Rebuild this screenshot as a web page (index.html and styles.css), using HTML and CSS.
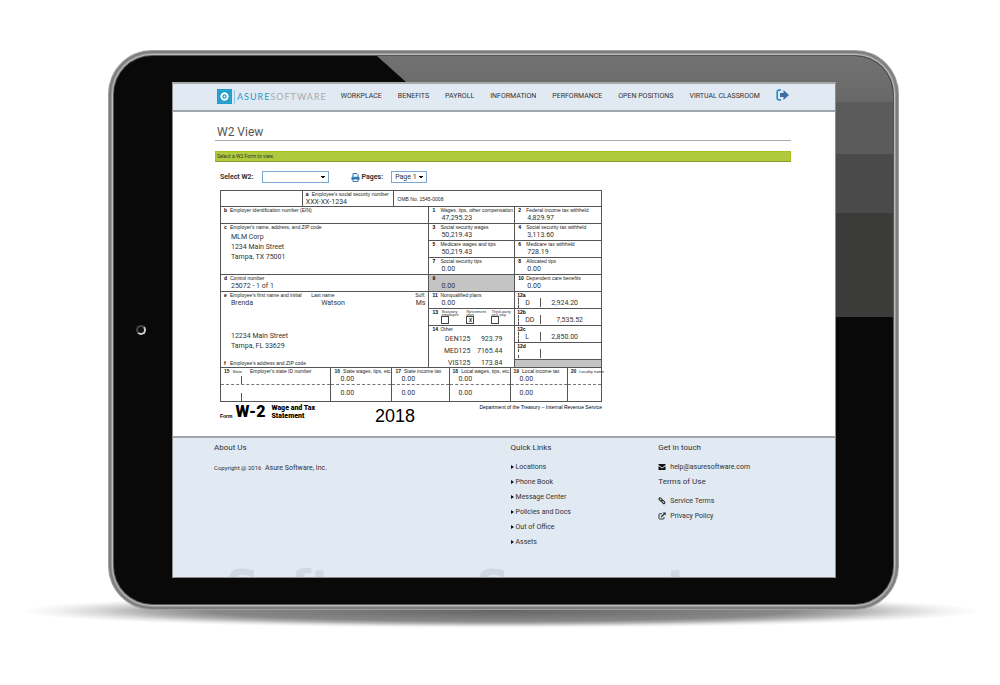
FILE: index.html
```html
<!DOCTYPE html>
<html lang="en">
<head>
<meta charset="utf-8">
<meta name="viewport" content="width=device-width, initial-scale=1">
<title>W2 View</title>
<link rel="stylesheet" href="styles.css">
</head>
<body>
<div class="stage">
<div class="tablet">
  <span class="home"></span>
  <div class="screen">
    <header class="top">
      <a class="logo" href="#">
        <svg class="logo-mark" viewBox="0 0 14 14" aria-hidden="true"><rect width="14" height="14" fill="#1f9ccb"/><rect x="1.5" y="1.5" width="11" height="11" fill="none" stroke="#5dbbe0" stroke-width=".6" stroke-dasharray="1 1"/><circle cx="7" cy="7" r="3" fill="none" stroke="#fff" stroke-width="1.8"/><circle cx="7" cy="7" r=".9" fill="#fff"/></svg>
        <span class="logo-text"><b>ASURE</b>SOFTWARE</span>
      </a>
      <nav class="menu">
        <a href="#">WORKPLACE</a><a href="#">BENEFITS</a><a href="#">PAYROLL</a><a href="#">INFORMATION</a><a href="#">PERFORMANCE</a><a href="#">OPEN POSITIONS</a><a href="#">VIRTUAL CLASSROOM</a>
        <a href="#" aria-label="Sign out"><svg class="exit" viewBox="0 0 13 12"><path d="M5 1.2H2.8Q1.2 1.2 1.2 2.8V9.2Q1.2 10.8 2.8 10.8H5" fill="none" stroke="#2f8fcb" stroke-width="1.7"/><path d="M4 4H7.500V1L13 6 7.500 11V8H4Z" fill="#3c6fa8"/></svg></a>
      </nav>
    </header>
    <main class="content">
      <h1>W2 View</h1>
      <p class="notice">Select a W2 Form to view.</p>
      <div class="controls">
        <label for="w2">Select W2:</label>
        <select id="w2" class="pick wide"><option></option></select>
        <svg class="printer" viewBox="0 0 9 9" aria-hidden="true"><path d="M2 4V.6H6L7 1.600V4" fill="#fff" stroke="#2a6ca8"/><path d="M.5 7V4.500Q.5 3.800 1.200 3.800H7.800Q8.500 3.800 8.500 4.500V7Z" fill="#2f7fc0"/><path d="M2 6H7V8.500H2Z" fill="#fff" stroke="#2a6ca8" stroke-width=".9"/></svg>
        <label for="page">Pages:</label>
        <select id="page" class="pick"><option>Page 1</option></select>
      </div>
      <section class="w2">
        <div class="boxes">
          <div class="box blank"></div>
          <div class="box ssn"><h2><b>a</b>Employee's social security number</h2><p>XXX-XX-1234</p></div>
          <div class="box omb"><h2>OMB No. 1545-0008</h2></div>
          <div class="box left r2"><h2><b>b</b>Employer identification number (EIN)</h2></div>
          <div class="box left c"><h2><b>c</b>Employer's name, address, and ZIP code</h2><p class="address">MLM Corp<br>1234 Main Street<br>Tampa, TX 75001</p></div>
          <div class="box left r6"><h2><b>d</b>Control number</h2><p>25072 - 1 of 1</p></div>
          <div class="box left e">
            <div class="person">
              <div><h2><b>e</b>Employee's first name and initial</h2><p>Brenda</p></div>
              <div><h2>Last name</h2><p>Watson</p></div>
              <div><h2>Suff.</h2><p>Ms</p></div>
            </div>
            <p class="address">12234 Main Street<br>Tampa, FL 33629</p>
            <h2><b>f</b>Employee's address and ZIP code</h2>
          </div>
          <div class="box mid r2"><h2><b>1</b>Wages, tips, other compensation</h2><p>47,295.23</p></div>
          <div class="box right r2"><h2><b>2</b>Federal income tax withheld</h2><p>4,829.97</p></div>
          <div class="box mid r3"><h2><b>3</b>Social security wages</h2><p>50,219.43</p></div>
          <div class="box right r3"><h2><b>4</b>Social security tax withheld</h2><p>3,113.60</p></div>
          <div class="box mid r4"><h2><b>5</b>Medicare wages and tips</h2><p>50,219.43</p></div>
          <div class="box right r4"><h2><b>6</b>Medicare tax withheld</h2><p>728.19</p></div>
          <div class="box mid r5"><h2><b>7</b>Social security tips</h2><p>0.00</p></div>
          <div class="box right r5"><h2><b>8</b>Allocated tips</h2><p>0.00</p></div>
          <div class="box mid r6 shaded"><h2><b>9</b></h2><p>0.00</p></div>
          <div class="box right r6"><h2><b>10</b>Dependent care benefits</h2><p>0.00</p></div>
          <div class="box mid r7"><h2><b>11</b>Nonqualified plans</h2><p>0.00</p></div>
          <div class="box mid r8 checks"><h2><b>13</b></h2>
            <label>Statutory<br>employee<input type="checkbox"></label>
            <label>Retirement<br>plan<input type="checkbox" checked></label>
            <label>Third-party<br>sick pay<input type="checkbox"></label>
          </div>
          <div class="box mid other"><h2><b>14</b>Other</h2>
            <dl><dt>DEN125</dt><dd>923.79</dd><dt>MED125</dt><dd>7165.44</dd><dt>VIS125</dt><dd>173.84</dd></dl>
          </div>
          <div class="box right r7 code"><h2><b>12a</b></h2><p><span>D</span><span>2,924.20</span></p></div>
          <div class="box right r8 code"><h2><b>12b</b></h2><p><span>DD</span><span class="shift">7,535.52</span></p></div>
          <div class="box right r9 code"><h2><b>12c</b></h2><p><span>L</span><span>2,850.00</span></p></div>
          <div class="box right r10 code"><h2><b>12d</b></h2><p><span></span><span></span></p></div>
          <div class="box right r11 shaded"></div>
        </div>
        <table class="state">
          <colgroup><col class="w15"><col class="w16"><col class="w17"><col class="w18"><col class="w19"><col class="w20"></colgroup>
          <thead><tr><th class="id"><b>15</b><small>State</small>Employer's state ID number</th><th><b>16</b>State wages, tips, etc.</th><th><b>17</b>State income tax</th><th><b>18</b>Local wages, tips, etc.</th><th><b>19</b>Local income tax</th><th><b>20</b><small>Locality name</small></th></tr></thead>
          <tbody>
            <tr><td class="tick"></td><td>0.00</td><td>0.00</td><td>0.00</td><td>0.00</td><td></td></tr>
            <tr class="second"><td class="tick"></td><td>0.00</td><td>0.00</td><td>0.00</td><td>0.00</td><td></td></tr>
          </tbody>
        </table>
        <div class="caption">
          <span class="form-word">Form</span><strong class="form-no">W-2</strong>
          <span class="form-name">Wage and Tax<br>Statement</span>
          <span class="year">2018</span>
          <span class="dept">Department of the Treasury – Internal Revenue Service</span>
        </div>
      </section>
    </main>
    <footer class="foot">
      <section><h3>About Us</h3><p><small>Copyright @ 2016</small> &nbsp;Asure Software, Inc.</p></section>
      <section><h3>Quick Links</h3>
        <ul class="quick"><li><a href="#">Locations</a></li><li><a href="#">Phone Book</a></li><li><a href="#">Message Center</a></li><li><a href="#">Policies and Docs</a></li><li><a href="#">Out of Office</a></li><li><a href="#">Assets</a></li></ul>
      </section>
      <section class="touch"><h3>Get in touch</h3>
        <ul class="contact"><li><a href="#"><svg viewBox="0 0 8 8"><path d="M.5 1H7.500V2L4 4.500.5 2ZM.5 3 4 5.500 7.500 3V7H.5Z" fill="#111"/></svg>help@asuresoftware.com</a></li></ul>
        <h3>Terms of Use</h3>
        <ul class="contact">
          <li><a href="#"><svg viewBox="0 0 8 8"><g fill="none" stroke="#222" stroke-width="1"><rect x=".8" y="1.500" width="3.600" height="2" rx="1" transform="rotate(45 2.600 2.500)"/><rect x="3.500" y="4" width="3.600" height="2" rx="1" transform="rotate(45 5.300 5)"/></g></svg>Service Terms</a></li>
          <li><a href="#"><svg viewBox="0 0 8 8"><path d="M4 1.700H1.700Q1 1.700 1 2.400V6.300Q1 7 1.700 7H5.300Q6 7 6 6.300V5" fill="none" stroke="#222" stroke-width=".9"/><path d="M3.200 5 6.500 1.700" stroke="#222" stroke-width="1.200"/><path d="M4.700.5H7.700V3.500Z" fill="#222"/></svg>Privacy Policy</a></li>
        </ul>
      </section>
      <div class="watermark">Software Suggest</div>
    </footer>
  </div>
</div>
</div>
</body>
</html>
```
FILE: styles.css
```css
* { box-sizing: border-box; }
body { margin: 0; background: #fff; color: #333; font-family: Roboto, "Liberation Sans", sans-serif; font-size: 7px; line-height: 8px; }
h1, h2, h3, p, ul, dl, dd { margin: 0; padding: 0; font-weight: 400; }
ul { list-style: none; }
a { color: inherit; text-decoration: none; }

/* device */
.stage { position: relative; z-index: 0; padding: 56px 107px 83px 114px; }
.stage::after { content: ""; position: absolute; z-index: -1; left: 2%; right: 2%; bottom: 59px; height: 34px;
  background: radial-gradient(closest-side, #666 0%, #888 60%, #b0b0b0 74%, #d8d8d8 84%, #f0f0f0 92%, #fff 100%); }
.tablet { position: relative; display: grid; grid-template-columns: 58px minmax(0, 1fr) 57px; align-items: center; padding: 26px 0;
  background: #090909; border-radius: 38px;
  box-shadow: 0 0 0 1px #555, 0 0 0 2px #bbb, 0 0 0 3px #999, 0 0 0 5px #7d7d7d, 0 0 0 6px #a0a0a0; }
.tablet::before { content: ""; position: absolute; inset: 0; border-radius: 38px;
  background: linear-gradient(#727272 0, #686868 46px, #5b5b5b 46px, #5b5b5b 98px, #4a4a4a 98px, #4a4a4a 157px, #3b3b39 157px, #3b3b39 261px, #090909 261px);
  clip-path: polygon(263px 0, 100% 0, 100% 261px, 554px 261px); }
.home { width: 10px; height: 10px; margin-left: 22px; border: 2px solid #444; border-right-color: #ccc; border-bottom-color: #ccc; border-radius: 50%; background: #111; }
.screen { position: relative; background: #fff; border: 1px solid #8c8c8c; border-top: 2px solid #aaa; }

/* header */
.top { display: flex; align-items: flex-start; gap: 14px; height: 28px; padding: 5px 44px 0; background: #e1e9f2; border-bottom: 2px solid #a0a6ab; }
.logo { display: flex; gap: 2px; align-items: center; }
.logo-mark { width: 15px; height: 15px; }
.logo-text { padding-left: 2px; border-left: 1px solid #8fc4dd; font: 9px/14px Lato, sans-serif; letter-spacing: 1px; color: #aaa; }
.logo-text b { color: #1f9ccb; font-weight: 400; }
.menu { display: flex; flex: 1; gap: 16px; line-height: 14px; white-space: nowrap; }
.exit { display: block; width: 13px; height: 12px; }

/* page */
.content { padding: 13px 44px 10px 42px; }
h1 { padding: 0 2px 1px; border-bottom: 1px solid #aaa; font-size: 12px; line-height: 14px; color: #555; }
.notice { margin-top: 10px; padding: 0 1px; background: #b0c93d; border: 1px solid #a5c11e; border-bottom-color: #879c2c; font-size: 5px; line-height: 9px; }
.controls { display: flex; align-items: center; margin: 9px 0 7px 5px; line-height: 12px; }
.controls label { font-weight: 700; }
.pick { appearance: none; height: 12px; width: 36px; margin-left: 8px; padding: 0 3px; border: 1px solid #7ba6d6; border-radius: 0; color: #333;
  font: 7px/10px Roboto, sans-serif;
  background: conic-gradient(from -35deg at 50% 100%, #111 70deg, transparent 0) right 3px center / 4px 3px no-repeat, #fff; }
.pick.wide { width: 67px; }
.printer { width: 9px; height: 9px; margin: 0 2px 0 22px; }

/* W-2 form */
.w2 { max-width: 382px; margin-left: 5px; }
.boxes { display: grid; grid-template-columns: 82fr 91fr 36fr 86fr 87fr; grid-template-rows: 16px repeat(9, minmax(17px, auto)) 8px; border: solid #555; border-width: 0 1px 0 0; }
.box { min-width: 0; border: solid #555; border-width: 1px 0 0 1px; white-space: nowrap; }
.box p { padding-left: 12px; }
h2, .state th { font: 5px/7px "Liberation Sans", sans-serif; color: #222; text-align: left; white-space: nowrap; }
h2 { padding-left: 3px; }
h2 b { display: inline-block; min-width: 6px; color: #000; }
.mid h2 b, .right h2 b { min-width: 8px; }
.left { grid-column: 1 / 4; } .mid { grid-column: 4; } .right { grid-column: 5; }
.r2 { grid-row: 2; } .r3 { grid-row: 3; } .r4 { grid-row: 4; } .r5 { grid-row: 5; } .r6 { grid-row: 6; }
.r7 { grid-row: 7; } .r8 { grid-row: 8; } .r9 { grid-row: 9; } .r10 { grid-row: 10; } .r11 { grid-row: 11; }
.blank { grid-area: 1 / 1; }
.ssn { grid-area: 1 / 2; } .ssn p { padding-left: 3px; }
.omb { grid-area: 1 / 3 / 2 / 6; padding: 5px 1px 0; }
.c { grid-row: 3 / 6; }
.left p { padding-left: 10px; }
.left .address { line-height: 10px; }
.c .address { padding-top: 1px; }
.e { grid-row: 7 / 12; display: flex; flex-direction: column; justify-content: space-between; }
.person { display: grid; grid-template-columns: 90fr 100fr 17fr; }
.person div + div h2 { padding-left: 0; }
.person div + div + div { text-align: right; padding-right: 3px; }
.person div + div + div p { padding-left: 0; }
.person div + div + div h2 { text-align: right; }
.e .address { padding-top: 14px; }
.shaded { background: #c4c4c4; }
.checks { display: grid; grid-template-columns: 12px repeat(3, 25px); }
.checks h2 b { min-width: 0; }
.checks label { font: 4px/3px "Liberation Sans", sans-serif; padding-top: 1px; }
.checks input { appearance: none; display: grid; place-items: center; width: 8px; height: 8px; margin: 0; border: 1px solid #444; }
.checks input:checked::before { content: "x"; font: 7px/6px Roboto, sans-serif; }
.other { grid-row: 9 / 12; }
.other dl { display: grid; grid-template-columns: 41px 32px; grid-auto-rows: 12px; height: 34px; line-height: 12px; text-align: right; }
.code h2 { padding-left: 2px; line-height: 6px; }
.code p { display: grid; grid-template-columns: 16px 1fr; margin-left: 3px; padding-left: 6px; border-left: 1px dashed #555; line-height: 10px; }
.code span:first-child { border-right: 1px solid #555; height: 9px; }
.code span + span { padding-left: 10px; }
.code span + .shift { padding-left: 15px; }
.state { width: 100%; table-layout: fixed; border-collapse: collapse; border: 1px solid #555; }
.state th, .state td { padding: 0 0 0 3px; border-left: 1px solid #555; }
.state th b { margin-right: 3px; } .state small { font-size: 4px; }
.id small { margin-right: 8px; }
.state td { padding-left: 9px; height: 9px; line-height: 8px; }
.state .second td { height: 17px; border-top: 1px dashed #777; }
.w15 { width: 29%; } .w16 { width: 16%; } .w17 { width: 15%; } .w18 { width: 16%; } .w19 { width: 15%; }
.tick { background: linear-gradient(#555, #555) 20px 100% / 1px 8px no-repeat; }
.caption { display: flex; align-items: flex-start; color: #000; white-space: nowrap; }
.form-word { font: 700 5px/6px "Liberation Sans", sans-serif; padding-top: 11px; }
.form-no { margin-left: 3px; font: 900 16px/20px Roboto, sans-serif; }
.form-name { margin: 2px 0 0 6px; font: 900 7px/8px Roboto, sans-serif; }
.year { flex: 1; margin-left: 60px; padding-top: 4px; font: 18px/20px "Liberation Sans", sans-serif; }
.dept { font: 5px/10px "Liberation Sans", sans-serif; }

/* footer */
.foot { position: relative; overflow: hidden; display: grid; grid-template-columns: 297fr 148fr 177fr; padding: 5px 0 27px 41px; background: #e1e9f2; border-top: 2px solid #a0a6ab; }
h3 { font-size: 8px; line-height: 10px; }
.foot p, .foot ul { padding-top: 7px; line-height: 15px; }
.foot small { font-size: 6px; }
.touch ul + h3 { margin-top: 2px; }
.quick li { display: flex; align-items: center; gap: 2px; }
.quick li::before { content: ""; border: 2px solid transparent; border-left: 3px solid #111; border-right: 0; }
.contact a { display: flex; align-items: center; gap: 4px; }
.contact svg { width: 8px; height: 8px; }
.watermark { position: absolute; left: 53px; top: 125px; font: 700 46px/48px "DejaVu Sans", sans-serif; color: #d0d8e1; white-space: nowrap; }
```
